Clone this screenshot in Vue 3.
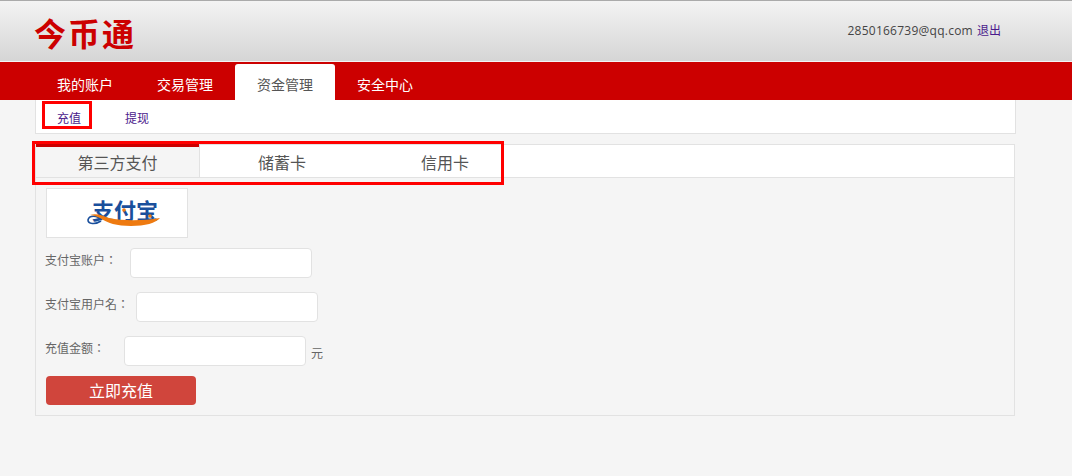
<script setup>
const navItems = [
  { label: '我的账户', active: false },
  { label: '交易管理', active: false },
  { label: '资金管理', active: true },
  { label: '安全中心', active: false }
]
const payTabs = [
  { label: '第三方支付', cls: 'pay-first' },
  { label: '储蓄卡', cls: 'pay-second' },
  { label: '信用卡', cls: 'pay-third' }
]
</script>

<template>
  <div class="page">
    <header class="header">
      <div class="brand">今币通</div>
      <div class="user">
        <span class="email">2850166739@qq.com</span>
        <a class="link">退出</a>
      </div>
    </header>

    <nav class="nav">
      <a v-for="item in navItems" :key="item.label" class="nav-item" :class="{ active: item.active }">{{ item.label }}</a>
    </nav>

    <div class="subnav">
      <a class="link sub-a">充值</a>
      <a class="link sub-b">提现</a>
      <div class="mark mark-sub"></div>
    </div>

    <section class="panel">
      <div class="tabs">
        <div v-for="tab in payTabs" :key="tab.label" class="pay-tab" :class="tab.cls">{{ tab.label }}</div>
      </div>
      <div class="mark mark-tabs"></div>

      <div class="body">
        <div class="logo-box">
          <div class="ali">
            <span class="ali-text">支付宝</span>
            <svg class="ali-swoosh" width="74" height="26" viewBox="0 0 74 26">
              <circle cx="37" cy="10" r="1.8" fill="#ee7a10" />
              <circle cx="63" cy="16" r="1.8" fill="#ee7a10" />
              <g transform="translate(0 12)">
                <path d="M15 8C10 3 2 3 1 8C1 12 8 13 14 9" fill="none" stroke="#1a4f9c" stroke-width="1.6" />
                <path d="M3 3C10 1 16 4 22 6C36 9 56 9 73 6C69 11 58 14 44 14C30 14 20 11 13 6C9 4 5 3 3 3Z" fill="#ee7a10" />
              </g>
            </svg>
          </div>
        </div>

        <div class="row row-1">
          <label class="label">支付宝账户：</label>
          <input class="field" type="text" />
        </div>
        <div class="row row-2">
          <label class="label">支付宝用户名：</label>
          <input class="field" type="text" />
        </div>
        <div class="row row-3">
          <label class="label">充值金额：</label>
          <input class="field" type="text" />
          <span class="unit">元</span>
        </div>
        <button class="submit" type="button">立即充值</button>
      </div>
    </section>
  </div>
</template>

<style>
html, body { margin: 0; background: #f5f5f5; }
</style>

<style scoped>
.page {
  width: 1072px;
  height: 476px;
  overflow: hidden;
  background: #f5f5f5;
  font-family: "Open Sans", "Noto Sans CJK SC", sans-serif;
  font-size: 12px;
  color: #666;
}
.header {
  height: 60px;
  border-top: 1px solid #aaa;
  border-bottom: 1px solid #f4f4f4;
  background: linear-gradient(#f3f3f3, #d5d5d5);
  display: flex;
  align-items: center;
  justify-content: space-between;
  padding: 0 71px 0 34px;
}
.brand {
  font-family: "Noto Sans CJK SC", sans-serif;
  font-size: 32px;
  font-weight: 700;
  line-height: 40px;
  letter-spacing: 2px;
  color: #cc0000;
  margin-top: 1px;
}
.user { color: #444; line-height: 18px; margin-top: -2px; }
.email { letter-spacing: 0.25px; }
.link { color: #4b1a8c; font-family: "Noto Sans CJK SC", sans-serif; }
.user .link { margin-left: 4px; }
.nav {
  height: 38px;
  background: #cc0000;
  display: flex;
  padding-left: 35px;
}
.nav-item {
  width: 100px;
  margin-top: 2px;
  height: 36px;
  line-height: 41px;
  text-align: center;
  color: #fff;
  font-family: "Noto Sans CJK SC", sans-serif;
  font-size: 14px;
  border-radius: 3px 3px 0 0;
}
.nav-item.active { background: #fff; color: #555; }
.subnav {
  position: relative;
  box-sizing: border-box;
  width: 981px;
  height: 34px;
  margin-left: 35px;
  background: #fff;
  border: 1px solid #e2e2e2;
  border-top: 0;
  line-height: 35px;
  display: flex;
}
.sub-a { margin-left: 21px; }
.sub-b { margin-left: 44px; }
.mark { position: absolute; box-sizing: border-box; border: 3px solid #f00; }
.mark-sub { left: 6px; top: 1px; width: 50px; height: 28px; }
.panel {
  position: relative;
  box-sizing: border-box;
  width: 980px;
  height: 272px;
  margin: 10px 0 0 35px;
  border: 1px solid #e2e2e2;
}
.tabs {
  height: 32px;
  background: #fff;
  border-bottom: 1px solid #e2e2e2;
  display: flex;
  font-family: "Noto Sans CJK SC", sans-serif;
  font-size: 16px;
  color: #555;
}
.pay-tab { line-height: 34px; text-align: center; box-sizing: border-box; }
.pay-first {
  width: 163px;
  height: 33px;
  background: #f5f5f5;
  border-top: 3px solid #cc0000;
  margin-top: -1px;
  line-height: 30px;
}
.pay-second { width: 165px; border-left: 1px solid #e2e2e2; }
.pay-third { width: 162px; }
.mark-tabs { left: -4px; top: -4px; width: 472px; height: 44px; }
.body { position: relative; }
.logo-box {
  box-sizing: border-box;
  width: 142px;
  height: 50px;
  margin: 10px 0 0 10px;
  background: #fff;
  border: 1px solid #e2e2e2;
  display: flex;
  align-items: center;
  justify-content: center;
}
.ali { position: relative; width: 74px; height: 28px; margin-left: 14px; margin-top: 2px; }
.ali-text {
  position: absolute;
  left: 5px;
  top: -4px;
  font-family: "Noto Sans CJK SC", sans-serif;
  font-size: 22px;
  line-height: 26px;
  font-weight: 700;
  color: #1a4f9c;
  white-space: nowrap;
}
.ali-swoosh { position: absolute; left: 0; top: 0; }
.row { display: flex; align-items: center; margin-left: 9px; }
.row-1 { margin-top: 10px; height: 30px; }
.row-2 { margin-top: 14px; height: 30px; }
.row-3 { margin-top: 14px; height: 30px; }
.label {
  font-family: "Noto Sans CJK TC", sans-serif;
  font-size: 12px;
  color: #666;
  white-space: nowrap;
  margin-top: -7px;
}
.row-1 .label { width: 85px; }
.row-2 .label { width: 91px; }
.row-3 .label { width: 79px; }
.field {
  box-sizing: border-box;
  width: 182px;
  height: 30px;
  padding: 0;
  background: #fff;
  border: 1px solid #e2e2e2;
  border-radius: 4px;
  outline: none;
}
.unit {
  font-family: "Noto Sans CJK SC", sans-serif;
  margin-left: 5px;
  margin-top: 2px;
  color: #666;
}
.submit {
  display: block;
  width: 150px;
  height: 29px;
  margin: 10px 0 0 10px;
  padding: 0;
  border: 0;
  border-radius: 4px;
  background: #d0453c;
  color: #fff;
  font-family: "Noto Sans CJK SC", sans-serif;
  font-size: 16px;
  line-height: 29px;
}
</style>
